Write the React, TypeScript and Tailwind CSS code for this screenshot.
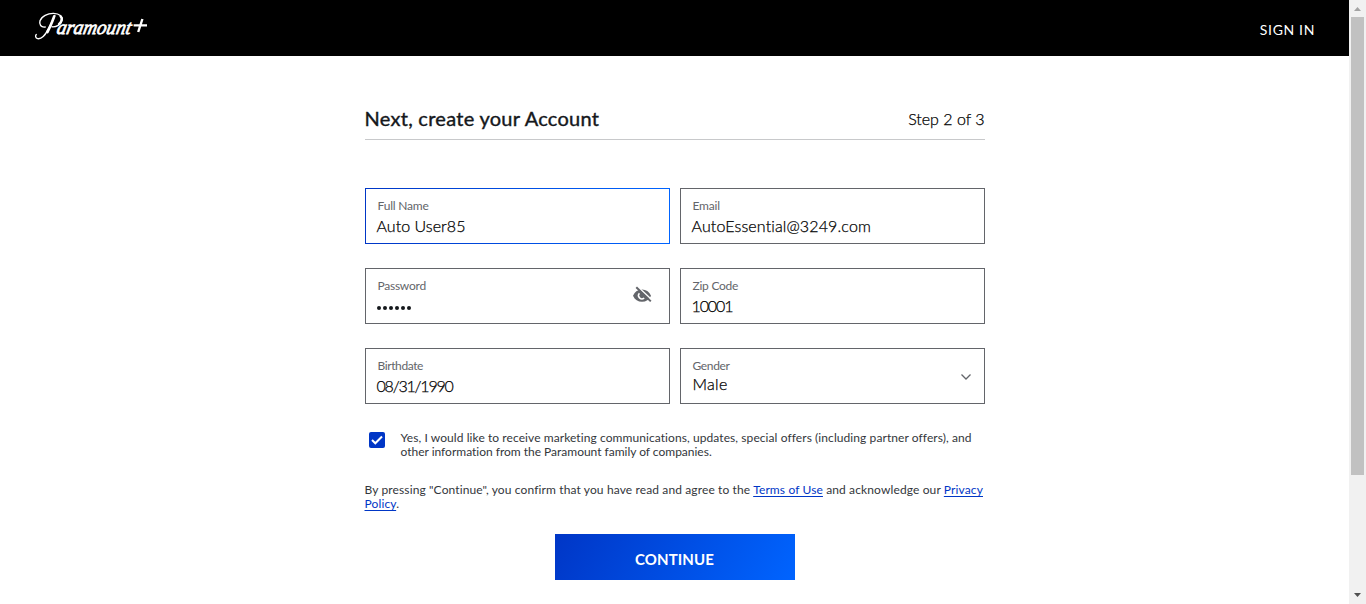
import type { ReactNode } from "react";

function Logo() {
  return (
    <svg width="114" height="30" viewBox="0 0 114 30" className="block" role="img">
      <g fill="none" stroke="#fff" strokeLinecap="round">
        <path d="M19.8 3.4C17.6 9 15 14 12.6 18.4C9.6 24 6 27.2 2.600 26.600C.4 26.200.2 23.800 1.200 22.600" strokeWidth="1.4" />
        <path d="M19.200 4.400C17 10.400 15 15.400 12.400 20" strokeWidth="2.700" />
        <path d="M10.200 15C6 15.600 3.900 12.600 5 8.800C6.600 4 12.600 1.300 18.600 1.400C24.400 1.600 28 4.400 27 8.600C26 12.600 21.400 15.200 17 14.800" strokeWidth="1.4" />
        <path d="M25.600 4.400C27.800 6.400 26.400 10 24 12.200" strokeWidth="2.400" />
        <path d="M107.400 7L103.200 20M98.600 13.400H112" strokeWidth="2.400" strokeLinecap="butt" />
      </g>
      <text
        x="21"
        y="22.400"
        fill="#fff"
        stroke="#fff"
        strokeWidth="0.75"
        textLength="74"
        lengthAdjust="spacingAndGlyphs"
        transform="translate(4.700 0) skewX(-12)"
        className="font-['Liberation_Serif',serif] text-[20px] italic"
      >
        aramount
      </text>
    </svg>
  );
}

type FieldProps = {
  label: string;
  labelClass?: string;
  valueClass?: string;
  active?: boolean;
  icon?: ReactNode;
  children: ReactNode;
};

function Field({ label, labelClass = "", valueClass = "", active, icon, children }: FieldProps) {
  return (
    <div className={active ? "h-14 bg-linear-to-r from-[#0036c6] to-[#0064ff] p-px" : "h-14 bg-[#63656a] p-px"}>
      <div className="flex h-full items-center justify-between bg-white">
        <div className="flex h-full flex-col pl-[11px] pt-[9px]">
          <span className={`pl-px text-[12px] leading-4 text-[#63656a] ${labelClass}`}>{label}</span>
          <span className={`text-[16px] leading-6 font-light text-black [-webkit-text-stroke:0.25px_black] ${valueClass}`}>
            {children}
          </span>
        </div>
        {icon}
      </div>
    </div>
  );
}

function EyeOff() {
  return (
    <svg width="20" height="18" viewBox="0 0 20 18" className="mr-[17px] mb-0.5">
      <path d="M1 9.700C2.800 5.600 6 3.600 10 3.600S17.200 5.600 19 9.700C17.200 13.800 14 15.800 10 15.800S2.800 13.800 1 9.700Z" fill="#63656a" />
      <path d="M7.400 7.200A3.400 3.400 0 0 0 12.200 12" fill="none" stroke="#fff" strokeWidth="1.500" />
      <path d="M5.400 .4L20 14" stroke="#fff" strokeWidth="1.600" />
      <path d="M4.300 1.300L18.800 15.400" stroke="#63656a" strokeWidth="2" />
    </svg>
  );
}

export default function App() {
  return (
    <div className="flex h-[604px] w-[1366px] overflow-hidden bg-white font-['Lato',sans-serif] [font-variant-ligatures:none]">
      <div className="flex min-w-0 flex-1 flex-col">
        <header className="flex h-14 shrink-0 items-start justify-between bg-black pl-[35px] pr-[34px]">
          <div className="pt-3">
            <Logo />
          </div>
          <a className="pt-5 text-[14px] leading-5 tracking-[0.65px] text-white">SIGN IN</a>
        </header>

        <main className="mx-auto w-[620px]">
          <div className="flex h-[84px] items-end justify-between border-b border-[#c8c9cb] pb-[9px]">
            <h1 className="text-[20px] leading-6 tracking-[0.28px] text-[#15181c] [-webkit-text-stroke:0.4px_#15181c]">
              Next, create your Account
            </h1>
            <span className="text-[16px] leading-[22px] font-light text-black [-webkit-text-stroke:0.25px_black]">
              Step 2 of 3
            </span>
          </div>

          <form className="mt-12 grid grid-cols-2 gap-x-2.5 gap-y-6">
            <Field label="Full Name" labelClass="tracking-[-0.2px]" valueClass="tracking-[0.06px]" active>Auto User85</Field>
            <Field label="Email" labelClass="tracking-[-0.2px]" valueClass="tracking-[0.13px]">AutoEssential@3249.com</Field>
            <Field label="Password" labelClass="tracking-[-0.25px]" icon={<EyeOff />}>
              <span className="flex h-6 items-center gap-0.5 pt-[3px]">
                {[0, 1, 2, 3, 4, 5].map((i) => (
                  <span key={i} className="size-[4px] rounded-full bg-[#15181c]" />
                ))}
              </span>
            </Field>
            <Field label="Zip Code" labelClass="tracking-[-0.25px]" valueClass="tracking-[-1.1px]">10001</Field>
            <Field label="Birthdate" labelClass="tracking-[-0.4px]" valueClass="tracking-[-1.2px]">08/31/1990</Field>
            <Field
              label="Gender"
              labelClass="tracking-[-0.35px]"
              valueClass="pl-px -mt-0.5 tracking-[0.3px]"
              icon={
                <svg width="12" height="8" viewBox="0 0 12 8" className="mr-3 mt-px">
                  <path d="M1.500 1.500L6 6L10.500 1.500" fill="none" stroke="#63656a" strokeWidth="1.300" />
                </svg>
              }
            >
              Male
            </Field>
          </form>

          <div className="mt-[27px] flex pl-1">
            <div className="mt-px flex size-4 items-center justify-center rounded-[2px] bg-[#0036c6]">
              <svg width="12" height="10" viewBox="0 0 12 10">
                <path d="M1 5L4.300 8.300L11 1.500" fill="none" stroke="#fff" strokeWidth="2" />
              </svg>
            </div>
            <p className="ml-4 text-[12px] leading-[14px] text-[#33363b]">
              <span className="block whitespace-nowrap tracking-[0.08px]">
                Yes, I would like to receive marketing communications, updates, special offers (including partner offers), and
              </span>
              <span className="block whitespace-nowrap tracking-[-0.01px]">
                other information from the Paramount family of companies.
              </span>
            </p>
          </div>

          <p className="mt-6 w-[630px] text-[12px] leading-[14px] tracking-[0.125px] text-[#33363b]">
            By pressing "Continue", you confirm that you have read and agree to the{" "}
            <a className="text-[#0036c6] underline underline-offset-2">Terms of Use</a> and acknowledge our{" "}
            <a className="text-[#0036c6] underline underline-offset-2">
              Privacy
              <br />
              Policy
            </a>
            .
          </p>

          <button className="mx-auto mt-[23px] flex h-[46px] w-60 items-center justify-center bg-linear-[120deg] from-[#0036c6] to-[#0064ff] pt-[3px] text-[15px] font-bold leading-5 tracking-[0.1px] text-white">
            CONTINUE
          </button>
        </main>
      </div>

      <div className="flex w-[17px] shrink-0 flex-col items-center bg-[#f1f1f1]">
        <svg width="17" height="17" viewBox="0 0 17 17" className="shrink-0">
          <path d="M5 11L8.500 7L12 11Z" fill="#a3a3a3" />
        </svg>
        <div className="h-[458px] w-[13px] bg-[#c1c1c1]" />
        <svg width="17" height="17" viewBox="0 0 17 17" className="mt-auto shrink-0">
          <path d="M5 6L8.500 10L12 6Z" fill="#505050" />
        </svg>
      </div>
    </div>
  );
}
